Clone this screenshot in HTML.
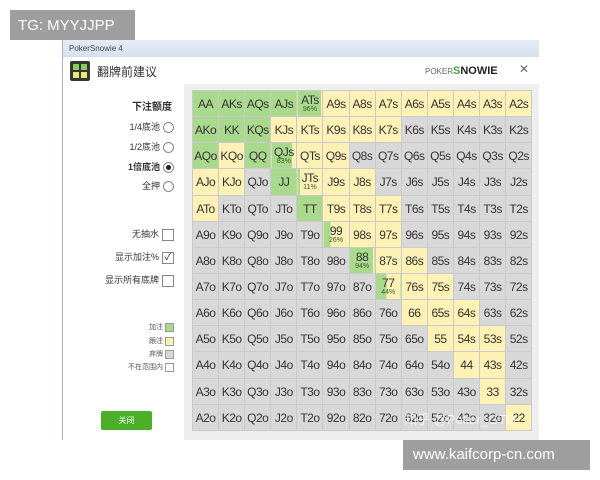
<!DOCTYPE html>
<html><head><meta charset="utf-8"><style>
*{margin:0;padding:0;box-sizing:border-box}
body{width:600px;height:480px;background:#fff;position:relative;overflow:hidden;font-family:"Liberation Sans","Noto Sans CJK SC",sans-serif}
.win{position:absolute;left:62px;top:40px;width:476px;height:400px;background:#fff;border-left:1px solid #aab4c2}
.tb{position:absolute;left:0;top:0;width:476px;height:17px;background:linear-gradient(#e4ecf5,#d6e1ee);font-size:8px;color:#444;padding:4px 0 0 6px}
.hd{position:absolute;left:0;top:17px;width:476px;height:27px;background:#fff}
.ico{position:absolute;left:7px;top:4px;width:20px;height:20px;background:#2e3a2e;border-radius:2px}
.ico i{position:absolute;width:6px;height:6px}
.ttl{position:absolute;left:34px;top:6px;font-size:12px;color:#333}
.logo{position:absolute;left:362px;top:8px;font-size:8px;color:#666}
.logo b{font-size:11px;color:#222;font-weight:900}
.x{position:absolute;left:456px;top:5px;font-size:12px;color:#666}
.right{position:absolute;left:121px;top:44px;width:355px;height:356px;background:#eeeeee}
.lbl{position:absolute;right:0;font-size:9px;color:#333;text-align:right}
.rad{display:inline-block;width:11px;height:11px;border:1px solid #888;border-radius:50%;vertical-align:middle;margin-left:3px;position:relative;background:#fff}
.chk{display:inline-block;width:12px;height:12px;border:1px solid #888;vertical-align:middle;margin-left:3px;background:#fff;font-size:10px;line-height:10px;text-align:center}
table{position:absolute;left:192px;top:90px;border-collapse:collapse}
td{width:26.1px;height:26.15px;border:1px solid #c9c9c9;font-size:12px;color:#333;text-align:center;vertical-align:top;padding-top:7px;line-height:12px;white-space:nowrap;overflow:hidden;letter-spacing:-0.5px}
.G{background:#a9d98c}.Y{background:#fdf1b5}.X{background:#d8d8d8}
td small{display:block;font-size:7px;line-height:8px;color:#3a5a2a;letter-spacing:0}
td.m{padding-top:3px}
.ov{position:absolute;background:#9e9e9e;color:#fff}
</style></head><body>
<div class="ov" style="left:10px;top:10px;width:125px;height:30px;font-size:15px;padding:7px 0 0 8px">TG: MYYJJPP</div>
<div class="win">
<div class="tb">PokerSnowie 4</div>
<div class="hd"><div class="ico"><i style="left:3px;top:3px;background:#8fc85e"></i><i style="left:11px;top:3px;background:#8fc85e"></i><i style="left:3px;top:11px;background:#f3e27a"></i><i style="left:11px;top:11px;background:#f3e27a"></i></div>
<div class="ttl">翻牌前建议</div>
<div class="logo">POKER<b><span style="color:#3aa63a">S</span>NOWIE</b></div>
<div class="x">✕</div></div>
<div style="position:absolute;left:0;top:44px;width:121px;height:356px">
<div class="lbl" style="top:14px;right:12px;font-size:10px;font-weight:bold">下注额度</div>
<div class="lbl" style="top:36px;right:10px">1/4底池<span class="rad"></span></div>
<div class="lbl" style="top:56px;right:10px">1/2底池<span class="rad"></span></div>
<div class="lbl" style="top:76px;right:10px;font-weight:bold">1倍底池<span class="rad"><span style="position:absolute;left:2px;top:2px;width:5px;height:5px;border-radius:50%;background:#222"></span></span></div>
<div class="lbl" style="top:95px;right:10px">全押<span class="rad"></span></div>
<div class="lbl" style="top:143px;right:10px">无抽水<span class="chk"></span></div>
<div class="lbl" style="top:166px;right:10px">显示加注%<span class="chk">✓</span></div>
<div class="lbl" style="top:189px;right:10px">显示所有底牌<span class="chk"></span></div>
<div class="lbl" style="top:238px;right:10px;font-size:7px;color:#555">加注 <span style="display:inline-block;width:9px;height:9px;background:#a9d98c;border:1px solid #999;vertical-align:middle"></span></div>
<div class="lbl" style="top:252px;right:10px;font-size:7px;color:#555">跟注 <span style="display:inline-block;width:9px;height:9px;background:#fdf1b5;border:1px solid #999;vertical-align:middle"></span></div>
<div class="lbl" style="top:265px;right:10px;font-size:7px;color:#555">弃牌 <span style="display:inline-block;width:9px;height:9px;background:#d8d8d8;border:1px solid #999;vertical-align:middle"></span></div>
<div class="lbl" style="top:278px;right:10px;font-size:7px;color:#555">不在范围内 <span style="display:inline-block;width:9px;height:9px;background:#fff;border:1px solid #999;vertical-align:middle"></span></div>
<div style="position:absolute;left:38px;top:327px;width:51px;height:19px;background:#4caf2a;color:#fff;font-size:8px;text-align:center;line-height:19px;border-radius:2px">关闭</div>
</div>
<div class="right"></div>
</div>
<table>
<tr><td class="G">AA</td><td class="G">AKs</td><td class="G">AQs</td><td class="G">AJs</td><td class="G m" style="background:linear-gradient(90deg,#a9d98c 94%,#fdf1b5 94%)">ATs<small>96%</small></td><td class="Y">A9s</td><td class="Y">A8s</td><td class="Y">A7s</td><td class="Y">A6s</td><td class="Y">A5s</td><td class="Y">A4s</td><td class="Y">A3s</td><td class="Y">A2s</td></tr>
<tr><td class="G">AKo</td><td class="G">KK</td><td class="G">KQs</td><td class="Y">KJs</td><td class="Y">KTs</td><td class="Y">K9s</td><td class="Y">K8s</td><td class="Y">K7s</td><td class="X">K6s</td><td class="X">K5s</td><td class="X">K4s</td><td class="X">K3s</td><td class="X">K2s</td></tr>
<tr><td class="G">AQo</td><td class="Y">KQo</td><td class="G">QQ</td><td class="G m" style="background:linear-gradient(90deg,#a9d98c 83%,#fdf1b5 83%)">QJs<small>83%</small></td><td class="Y">QTs</td><td class="Y">Q9s</td><td class="X">Q8s</td><td class="X">Q7s</td><td class="X">Q6s</td><td class="X">Q5s</td><td class="X">Q4s</td><td class="X">Q3s</td><td class="X">Q2s</td></tr>
<tr><td class="Y">AJo</td><td class="Y">KJo</td><td class="X">QJo</td><td class="G">JJ</td><td class="Y m" style="background:linear-gradient(90deg,#a9d98c 11%,#fdf1b5 11%)">JTs<small>11%</small></td><td class="Y">J9s</td><td class="Y">J8s</td><td class="X">J7s</td><td class="X">J6s</td><td class="X">J5s</td><td class="X">J4s</td><td class="X">J3s</td><td class="X">J2s</td></tr>
<tr><td class="Y">ATo</td><td class="X">KTo</td><td class="X">QTo</td><td class="X">JTo</td><td class="G">TT</td><td class="Y">T9s</td><td class="Y">T8s</td><td class="Y">T7s</td><td class="X">T6s</td><td class="X">T5s</td><td class="X">T4s</td><td class="X">T3s</td><td class="X">T2s</td></tr>
<tr><td class="X">A9o</td><td class="X">K9o</td><td class="X">Q9o</td><td class="X">J9o</td><td class="X">T9o</td><td class="Y m" style="background:linear-gradient(90deg,#a9d98c 26%,#fdf1b5 26%)">99<small>26%</small></td><td class="Y">98s</td><td class="Y">97s</td><td class="X">96s</td><td class="X">95s</td><td class="X">94s</td><td class="X">93s</td><td class="X">92s</td></tr>
<tr><td class="X">A8o</td><td class="X">K8o</td><td class="X">Q8o</td><td class="X">J8o</td><td class="X">T8o</td><td class="X">98o</td><td class="G m" style="background:linear-gradient(90deg,#a9d98c 94%,#fdf1b5 94%)">88<small>94%</small></td><td class="Y">87s</td><td class="Y">86s</td><td class="X">85s</td><td class="X">84s</td><td class="X">83s</td><td class="X">82s</td></tr>
<tr><td class="X">A7o</td><td class="X">K7o</td><td class="X">Q7o</td><td class="X">J7o</td><td class="X">T7o</td><td class="X">97o</td><td class="X">87o</td><td class="Y m" style="background:linear-gradient(90deg,#a9d98c 44%,#fdf1b5 44%)">77<small>44%</small></td><td class="Y">76s</td><td class="Y">75s</td><td class="X">74s</td><td class="X">73s</td><td class="X">72s</td></tr>
<tr><td class="X">A6o</td><td class="X">K6o</td><td class="X">Q6o</td><td class="X">J6o</td><td class="X">T6o</td><td class="X">96o</td><td class="X">86o</td><td class="X">76o</td><td class="Y">66</td><td class="Y">65s</td><td class="Y">64s</td><td class="X">63s</td><td class="X">62s</td></tr>
<tr><td class="X">A5o</td><td class="X">K5o</td><td class="X">Q5o</td><td class="X">J5o</td><td class="X">T5o</td><td class="X">95o</td><td class="X">85o</td><td class="X">75o</td><td class="X">65o</td><td class="Y">55</td><td class="Y">54s</td><td class="Y">53s</td><td class="X">52s</td></tr>
<tr><td class="X">A4o</td><td class="X">K4o</td><td class="X">Q4o</td><td class="X">J4o</td><td class="X">T4o</td><td class="X">94o</td><td class="X">84o</td><td class="X">74o</td><td class="X">64o</td><td class="X">54o</td><td class="Y">44</td><td class="Y">43s</td><td class="X">42s</td></tr>
<tr><td class="X">A3o</td><td class="X">K3o</td><td class="X">Q3o</td><td class="X">J3o</td><td class="X">T3o</td><td class="X">93o</td><td class="X">83o</td><td class="X">73o</td><td class="X">63o</td><td class="X">53o</td><td class="X">43o</td><td class="Y">33</td><td class="X">32s</td></tr>
<tr><td class="X">A2o</td><td class="X">K2o</td><td class="X">Q2o</td><td class="X">J2o</td><td class="X">T2o</td><td class="X">92o</td><td class="X">82o</td><td class="X">72o</td><td class="X">62o</td><td class="X">52o</td><td class="X">42o</td><td class="X">32o</td><td class="Y">22</td></tr>
</table>
<div style="position:absolute;left:404px;top:409px;font-size:13px;color:rgba(255,255,255,0.75)">知乎 @Poker_GTO</div>
<div class="ov" style="left:403px;top:440px;width:187px;height:30px;font-size:15px;padding:6px 0 0 10px">www.kaifcorp-cn.com</div>
</body></html>
